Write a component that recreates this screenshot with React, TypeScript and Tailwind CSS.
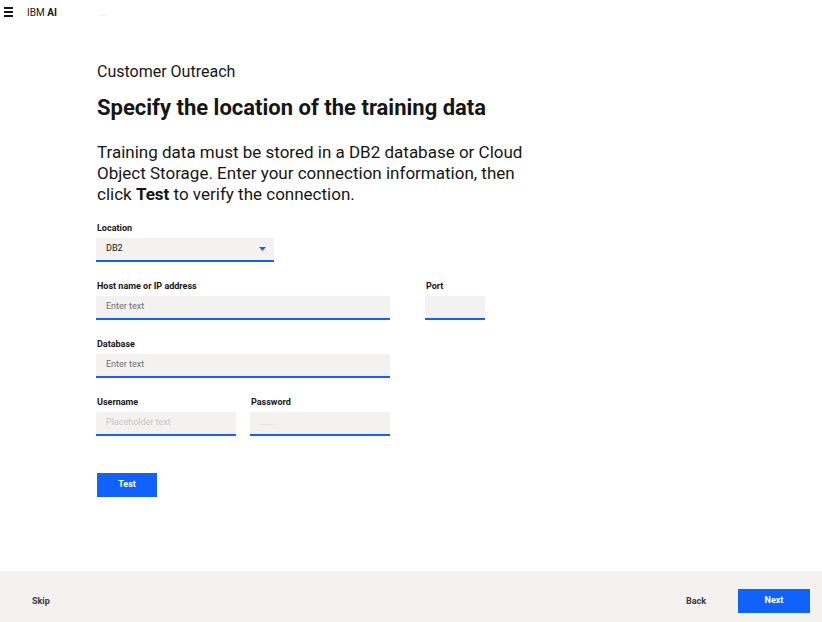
const plex = { fontFamily: 'Roboto, "Noto Sans", sans-serif' };

function Label({ children }: { children: string }) {
  return <p className="pl-[1px] text-[9px] font-bold leading-[12px] text-[#161616]">{children}</p>;
}

function Field({
  label,
  placeholder,
  width,
  faint,
}: {
  label: string;
  placeholder?: string;
  width: string;
  faint?: boolean;
}) {
  return (
    <div className={`flex flex-col gap-[4px] ${width}`}>
      <Label>{label}</Label>
      <div className="flex h-[24px] items-center border-b-2 border-[#0f62fe] bg-[#f3f2f1] px-[10px]">
        <span className={`text-[9px] ${faint ? "text-[#c6c6c6]" : "text-[#6f6f6f]"}`}>{placeholder}</span>
      </div>
    </div>
  );
}

export default function App() {
  return (
    <div className="flex h-[622px] w-[822px] flex-col overflow-hidden bg-white text-[#161616]" style={plex}>
      <header className="flex h-[24px] items-center">
        <div className="ml-[4px] flex h-[10px] w-[9px] flex-col justify-between">
          <span className="h-[2px] bg-[#161616]" />
          <span className="h-[2px] bg-[#161616]" />
          <span className="h-[2px] bg-[#161616]" />
        </div>
        <span className="ml-[14px] text-[10px]">
          IBM <b>AI</b>
        </span>
        <span className="ml-[44px] mt-[4px] text-[7px] text-[#d0d0d0]">...</span>
      </header>

      <main className="flex-1 pl-[96px]">
        <div className="pl-[1px]">
          <p className="mt-[36px] text-[16px] leading-[24px]">Customer Outreach</p>
          <h1 className="mt-[10px] text-[22px] font-bold leading-[28px]">Specify the location of the training data</h1>
          <p className="mt-[20px] w-[430px] text-[17px] leading-[21px]">
            Training data must be stored in a DB2 database or Cloud Object Storage. Enter your connection
            information, then click <b>Test</b> to verify the connection.
          </p>
        </div>

        <div className="mt-[17px] flex w-[178px] flex-col gap-[4px]">
          <Label>Location</Label>
          <div className="flex h-[24px] items-center justify-between border-b-2 border-[#0f62fe] bg-[#f3f2f1] pl-[10px] pr-[8px]">
            <span className="text-[9px] text-[#161616]">DB2</span>
            <svg width="7" height="4" viewBox="0 0 7 4">
              <path d="M0 0h7L3.5 4z" fill="#0f62fe" />
            </svg>
          </div>
        </div>

        <div className="mt-[18px] flex gap-[35px]">
          <Field label="Host name or IP address" placeholder="Enter text" width="w-[294px]" />
          <Field label="Port" width="w-[60px]" />
        </div>

        <div className="mt-[18px]">
          <Field label="Database" placeholder="Enter text" width="w-[294px]" />
        </div>

        <div className="mt-[18px] flex gap-[14px]">
          <Field label="Username" placeholder="Placeholder text" width="w-[140px]" faint />
          <Field label="Password" placeholder="......" width="w-[140px]" faint />
        </div>

        <button className="ml-[1px] mt-[37px] h-[24px] w-[60px] bg-[#0f62fe] text-[9px] font-bold text-white">Test</button>
      </main>

      <footer className="flex h-[51px] shrink-0 items-start bg-[#f3f2f1] pr-[12px] pt-[18px]">
        <span className="ml-[32px] mt-[6px] text-[9px] font-bold text-[#393939]">Skip</span>
        <span className="ml-auto mr-[32px] mt-[6px] text-[9px] font-bold text-[#393939]">Back</span>
        <button className="h-[24px] w-[72px] bg-[#0f62fe] text-[9px] font-bold text-white">Next</button>
      </footer>
    </div>
  );
}
